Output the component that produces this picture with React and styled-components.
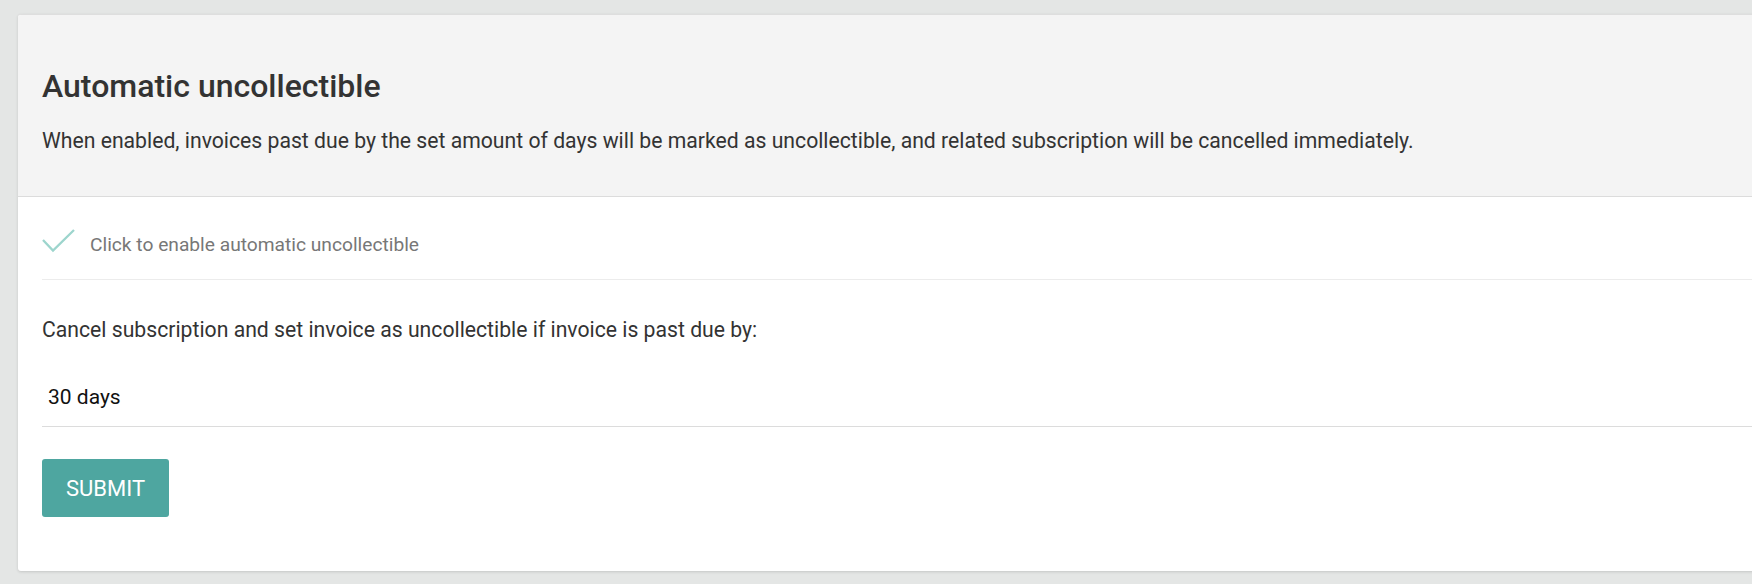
import React from "react";
import styled, { createGlobalStyle } from "styled-components";

const Global = createGlobalStyle`
  html, body { margin: 0; padding: 0; }
  body {
    background: #e4e6e5;
    font-family: Roboto, "Liberation Sans", Arial, sans-serif;
    overflow: hidden;
  }
`;

const Page = styled.div`
  padding: 14px 0 20px 18px;
  overflow: hidden;
`;

const Card = styled.section`
  margin-right: -12px;
  background: #ffffff;
  border-radius: 3px;
  border-top: 1px solid #dedede;
  box-shadow: 0 1px 3px rgba(0, 0, 0, 0.14);
  overflow: hidden;
`;

const Header = styled.header`
  background: #f4f4f4;
  padding: 52px 24px 40px;
  border-bottom: 1px solid #dcdcdc;
`;

const Title = styled.h2`
  margin: 0;
  font-size: 32px;
  line-height: 38px;
  font-weight: 500;
  color: #333333;
`;

const Description = styled.p`
  margin: 21px 0 0;
  font-size: 21.2px;
  line-height: 30px;
  color: #333333;
`;

const Body = styled.div`
  padding: 0 0 54px 24px;
`;

const CheckRow = styled.label`
  display: flex;
  align-items: flex-start;
  gap: 15px;
  padding: 32px 0 22px;
  border-bottom: 1px solid #ececec;
  cursor: pointer;
`;

const CheckLabel = styled.span`
  margin-top: 4px;
  font-size: 19.2px;
  line-height: 24px;
  color: #777777;
`;

const Prompt = styled.p`
  margin: 35px 0 0;
  font-size: 21.2px;
  line-height: 30px;
  color: #333333;
`;

const Select = styled.div`
  margin-top: 27px;
  padding: 10px 6px 14px;
  font-size: 21px;
  line-height: 30px;
  color: #111111;
  border-bottom: 1px solid #dcdcdc;
`;

const SubmitButton = styled.button`
  margin-top: 32px;
  width: 127px;
  height: 58px;
  border: none;
  border-radius: 3px;
  background: #4ea6a0;
  color: #ffffff;
  font-family: Roboto, "Liberation Sans", Arial, sans-serif;
  font-size: 22px;
  font-weight: 400;
  letter-spacing: 0;
  cursor: pointer;
`;

const CheckIcon = () => (
  <svg width="33" height="24" viewBox="0 0 33 24" fill="none">
    <path d="M1 11 L11 21.5 L32 1" stroke="#9dd5cd" strokeWidth="2.3" />
  </svg>
);

export default function App() {
  return (
    <Page>
      <Global />
      <Card>
        <Header>
          <Title>Automatic uncollectible</Title>
          <Description>
            When enabled, invoices past due by the set amount of days will be marked as uncollectible, and related subscription will be cancelled immediately.
          </Description>
        </Header>
        <Body>
          <CheckRow>
            <CheckIcon />
            <CheckLabel>Click to enable automatic uncollectible</CheckLabel>
          </CheckRow>
          <Prompt>Cancel subscription and set invoice as uncollectible if invoice is past due by:</Prompt>
          <Select>30 days</Select>
          <SubmitButton>SUBMIT</SubmitButton>
        </Body>
      </Card>
    </Page>
  );
}
